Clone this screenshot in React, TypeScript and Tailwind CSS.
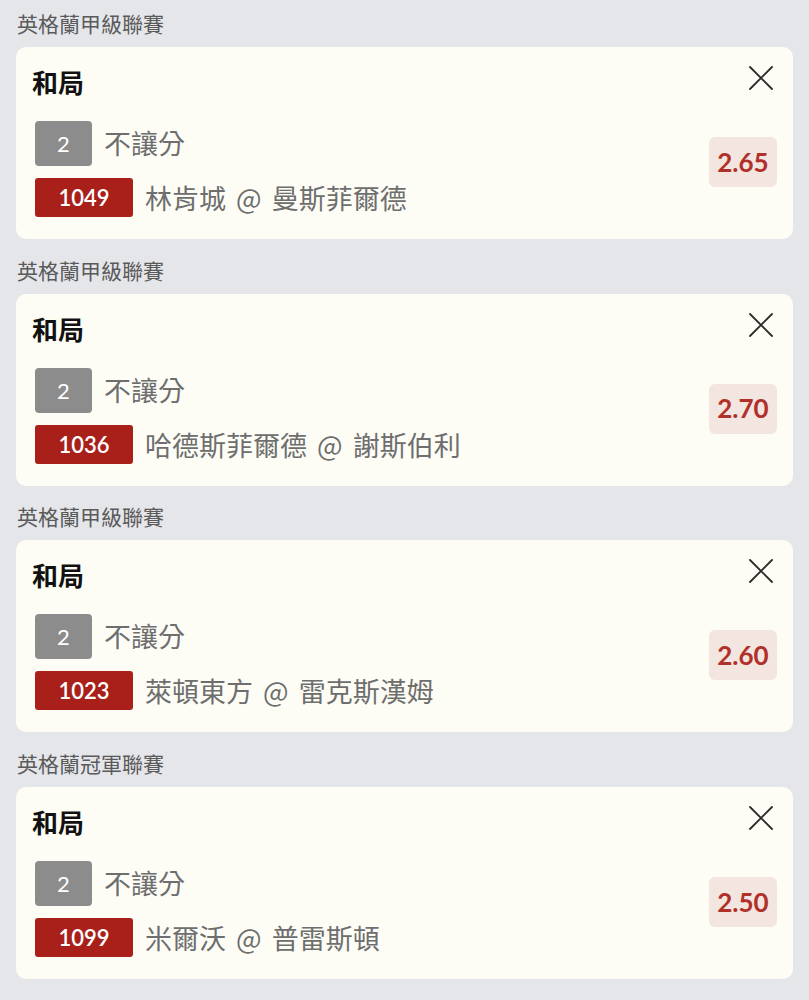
import React from "react";

const bets = [
  { league: "英格蘭甲級聯賽", code: "1049", match: "林肯城 @ 曼斯菲爾德", odds: "2.65" },
  { league: "英格蘭甲級聯賽", code: "1036", match: "哈德斯菲爾德 @ 謝斯伯利", odds: "2.70" },
  { league: "英格蘭甲級聯賽", code: "1023", match: "萊頓東方 @ 雷克斯漢姆", odds: "2.60" },
  { league: "英格蘭冠軍聯賽", code: "1099", match: "米爾沃 @ 普雷斯頓", odds: "2.50" },
];

const CloseIcon = () => (
  <svg width="24" height="24" viewBox="0 0 24 24" fill="none" stroke="#2a2a2a" strokeWidth="1.8" strokeLinecap="round">
    <path d="M1 1 L23 23 M23 1 L1 23" />
  </svg>
);

const App = () => {
  return (
    <div
      className="min-h-screen bg-[#e5e6ea] pt-[12px] px-4"
      style={{ fontFamily: 'Lato, "Noto Sans CJK TC", sans-serif' }}
    >
      {bets.map((bet, i) => (
        <div key={i} className="mb-[19.7px]">
          <p className="h-6 leading-6 text-[21px] text-[#5a5a5a] pl-[1px] mb-[11px]">{bet.league}</p>
          <div className="rounded-[10px] bg-[#fdfdf6] pl-[19px] pr-4 pt-[19px] pb-[22px]">
            <div className="flex items-start justify-between">
              <h2 className="-ml-[3px] text-[26px] leading-[34px] font-bold text-[#111]">和局</h2>
              <div className="mr-1">
                <CloseIcon />
              </div>
            </div>
            <div className="flex items-start justify-between mt-[21px]">
              <div className="flex flex-col gap-[12px]">
                <div className="flex items-center">
                  <span className="w-[57px] h-[45px] rounded-[4px] bg-[#8c8c8c] text-white text-[22px] flex items-center justify-center">
                    2
                  </span>
                  <span className="ml-[12px] text-[27px] text-[#6e6e6e] leading-none">不讓分</span>
                </div>
                <div className="flex items-center">
                  <span className="w-[98px] h-[39px] rounded-[3px] bg-[#a9201a] text-white text-[22px] font-semibold flex items-center justify-center">
                    {bet.code}
                  </span>
                  <span className="ml-[12px] text-[27px] text-[#6e6e6e] leading-none font-['Noto_Sans_CJK_TC',sans-serif] [word-spacing:4px]">
                    {bet.match}
                  </span>
                </div>
              </div>
              <div className="mt-[16px] w-[68px] h-[50px] rounded-[6px] bg-[#f3e5df] flex items-center justify-center text-[26px] font-bold text-[#b0302a]">
                {bet.odds}
              </div>
            </div>
          </div>
        </div>
      ))}
    </div>
  );
};

export default App;
